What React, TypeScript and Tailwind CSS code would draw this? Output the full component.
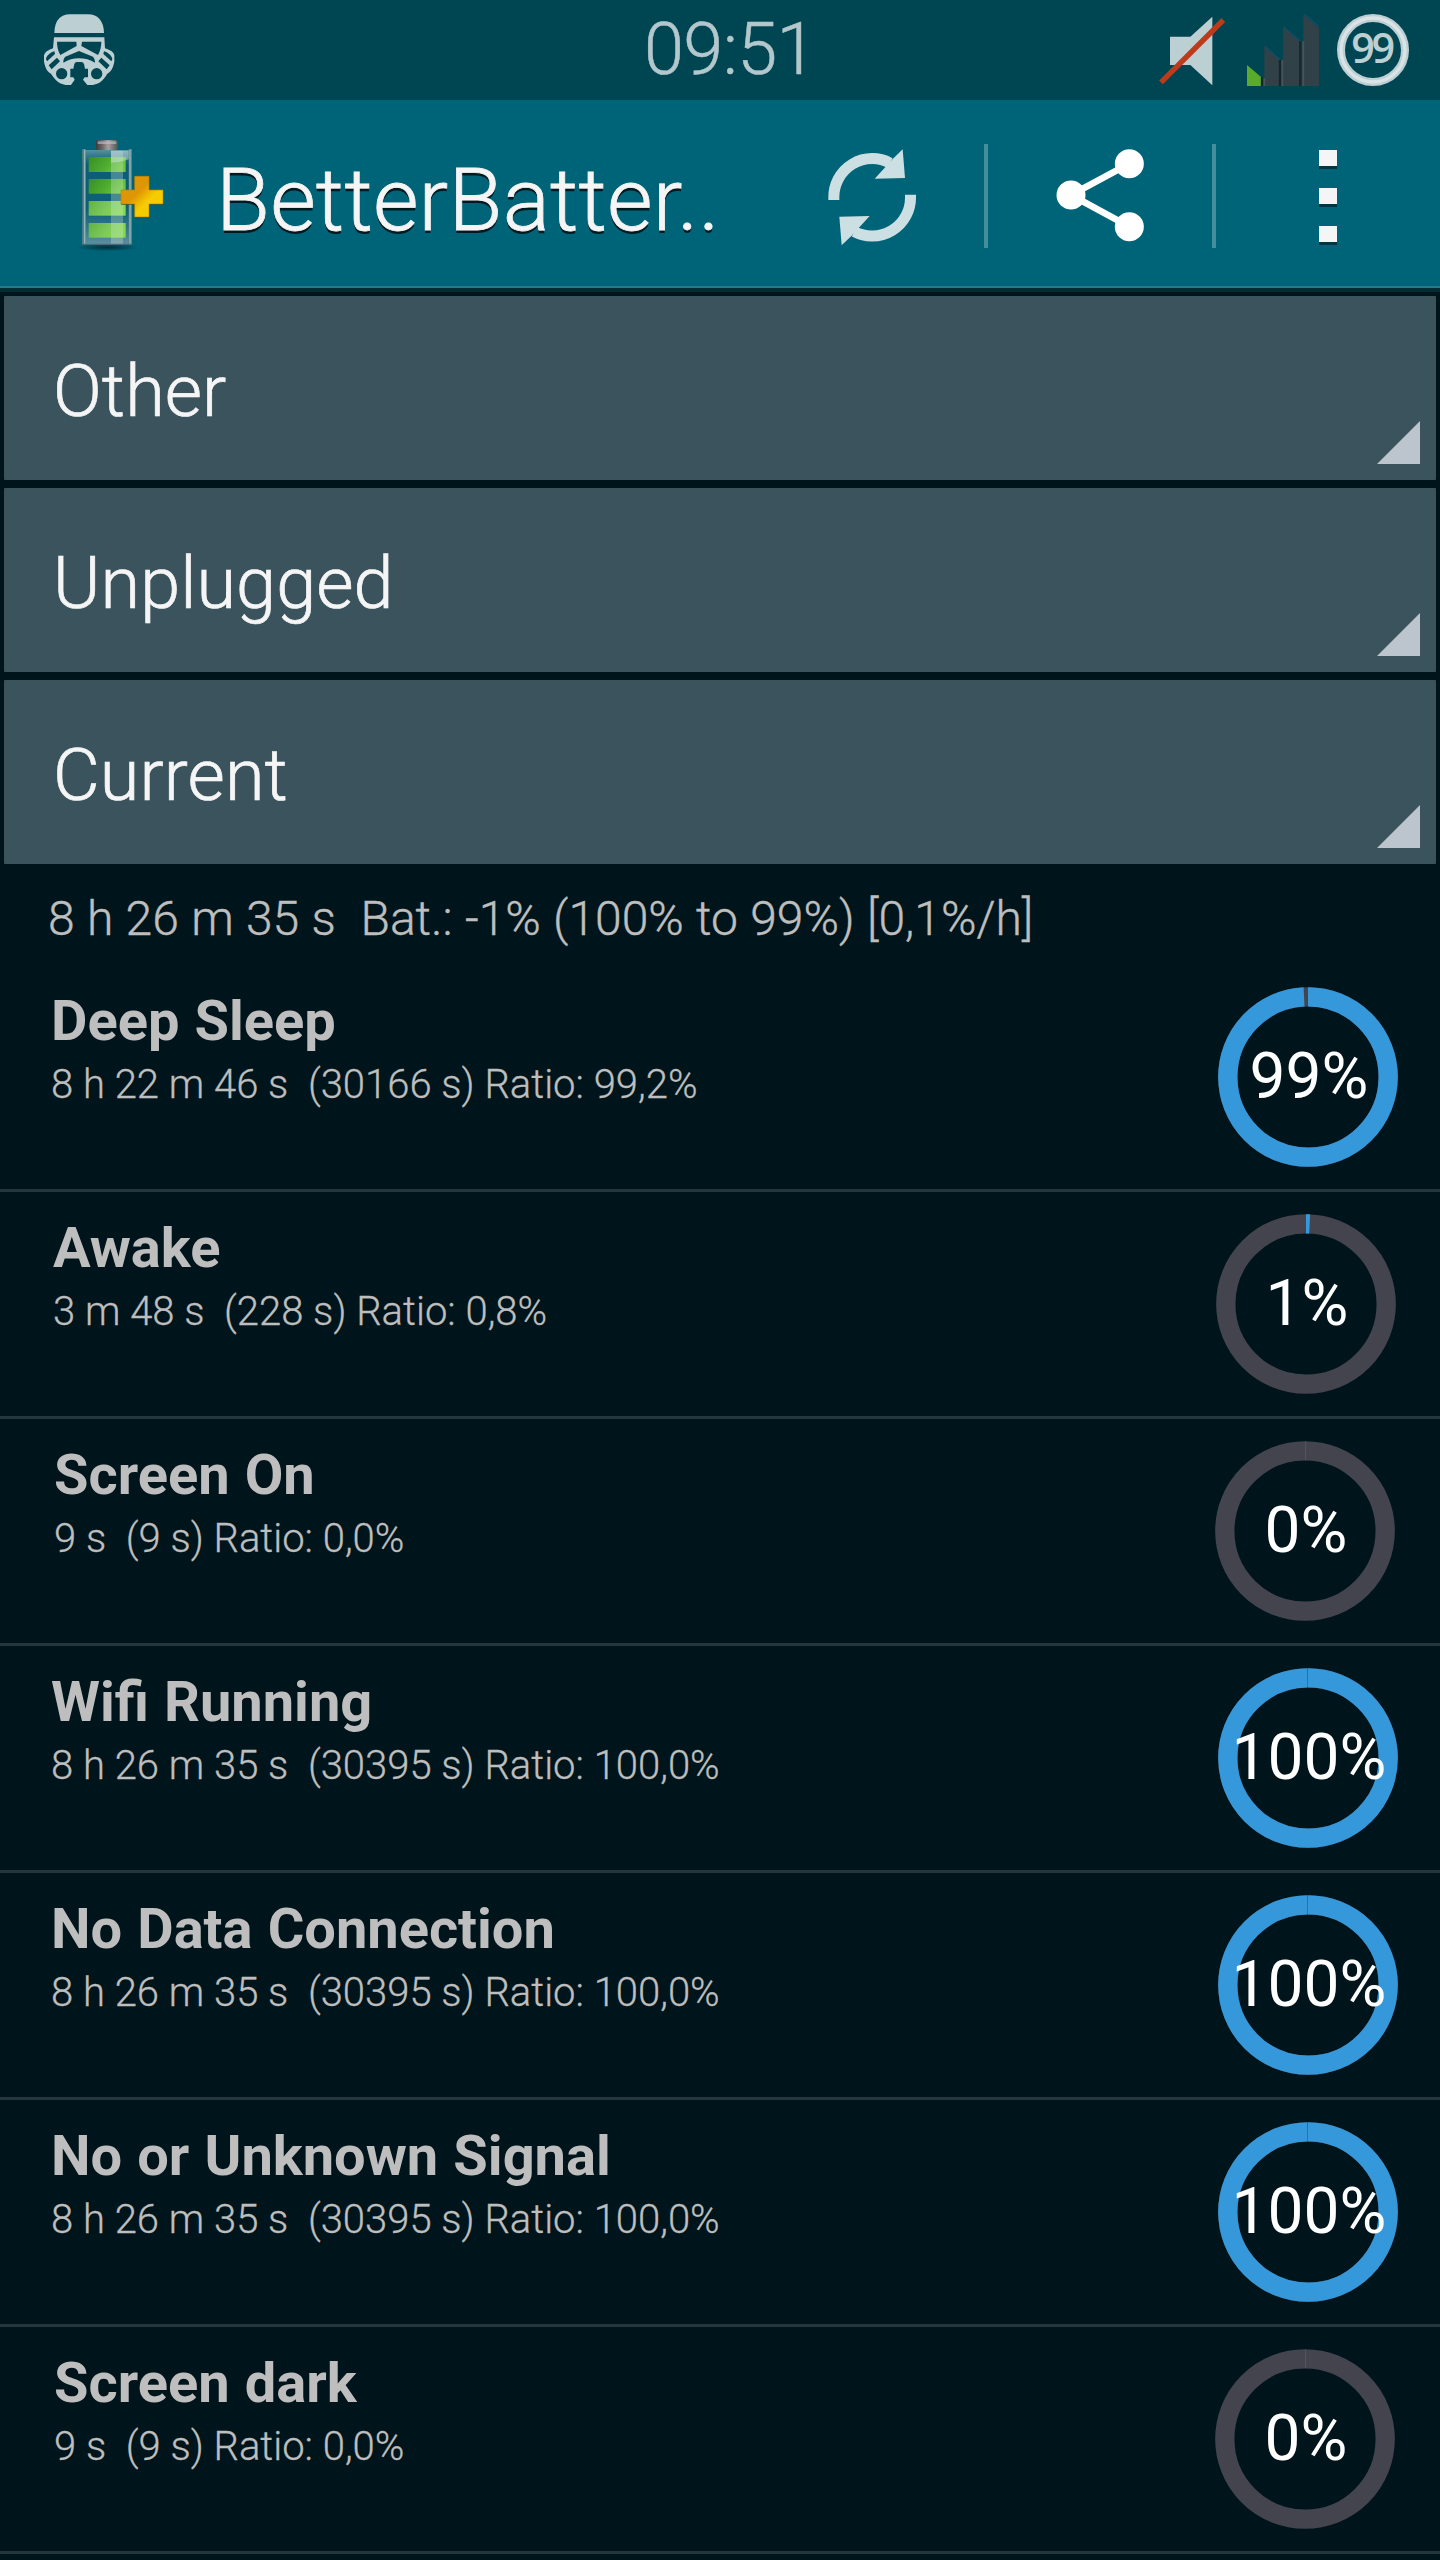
import clsx from "clsx";

type Stat = {
  name: string;
  duration: string;
  seconds: string;
  ratio: string;
  arc: number;
  label: string;
  textInset: string;
  ringInset: string;
};

const stats: Stat[] = [
  { name: "Deep Sleep", duration: "8 h 22 m 46 s", seconds: "30166 s", ratio: "99,2%", arc: 99.2, label: "99%", textInset: "pl-[51px]", ringInset: "pr-[42px]" },
  { name: "Awake", duration: "3 m 48 s", seconds: "228 s", ratio: "0,8%", arc: 0.75, label: "1%", textInset: "pl-[53px]", ringInset: "pr-[44px]" },
  { name: "Screen On", duration: "9 s", seconds: "9 s", ratio: "0,0%", arc: 0.05, label: "0%", textInset: "pl-[54px]", ringInset: "pr-[45px]" },
  { name: "Wifi Running", duration: "8 h 26 m 35 s", seconds: "30395 s", ratio: "100,0%", arc: 99.9, label: "100%", textInset: "pl-[51px]", ringInset: "pr-[42px]" },
  { name: "No Data Connection", duration: "8 h 26 m 35 s", seconds: "30395 s", ratio: "100,0%", arc: 99.9, label: "100%", textInset: "pl-[51px]", ringInset: "pr-[42px]" },
  { name: "No or Unknown Signal", duration: "8 h 26 m 35 s", seconds: "30395 s", ratio: "100,0%", arc: 99.9, label: "100%", textInset: "pl-[51px]", ringInset: "pr-[42px]" },
  { name: "Screen dark", duration: "9 s", seconds: "9 s", ratio: "0,0%", arc: 0.05, label: "0%", textInset: "pl-[54px]", ringInset: "pr-[45px]" },
];

function TrooperIcon() {
  return (
    <svg className="h-[74px] w-[74px]" viewBox="126 39 222 222" fill="#bccfd3" aria-hidden="true">
      <path d="M163 99C164 62 180 43 210 43H264C295 43 311 64 312 99Z" />
      <path
        fillRule="evenodd"
        d="M162 112H313L315 145C332 150 342 157 343 166V185C339 205 332 216 322 221C310 243 294 255 270 255H262L249 239L254 232H264V206H255L252 192Q250 186 244 186H231Q225 186 223 192L220 206H211V232H220L224 239L213 255H205C182 255 166 243 153 221C143 216 136 205 132 185V166C134 157 143 150 159 145Z
        M171 125H229L230 138L181 165C174 152 171 140 171 125Z
        M304 125H246L244 138L294 165C301 152 304 140 304 125Z
        M190 188C190 178 192 173 196 170L237 153L279 170C283 174 285 180 285 188C270 179 255 175 237 175C220 175 205 179 190 188Z
        M138 177C139 168 150 158 163 154L165 162L141 184Z
        M146 196L171 173L180 184L155 208Z
        M337 177C336 168 325 158 312 154L310 162L334 184Z
        M329 196L304 173L295 184L320 208Z
        M202 221A17 17 0 1 0 168 221A17 17 0 1 0 202 221Z
        M307 221A17 17 0 1 0 273 221A17 17 0 1 0 307 221Z"
      />
    </svg>
  );
}

function MutedIcon() {
  return (
    <svg className="h-[74px] w-[70px]" viewBox="54 39 210 222" aria-hidden="true">
      <path d="M90 110H151L217 50V256L151 195H90Z" fill="#bccfd3" />
      <path d="M63 247L250 60" stroke="#bd3a1a" strokeWidth="16" />
    </svg>
  );
}

function SignalIcon() {
  return (
    <svg className="h-[72px] w-[72px]" viewBox="321 42 216 216" aria-hidden="true">
      <path d="M321 195L364 232V258H321Z" fill="#5aab2a" />
      <g fill="#304248">
        <path d="M364 232L373 236V138L420 180L429 178V80L478 124L490 122V43L537 84V258H364Z" />
      </g>
      <path d="M375 138L419 178M431 80L480 122M493 42L537 80" stroke="#0b5068" strokeWidth="4" />
      <path d="M366 232V258M420 180V258M481 124V258" stroke="#15272e" strokeWidth="7" />
      <path d="M373 234V258M427 180V258M490 124V258" stroke="#44565c" strokeWidth="5" />
    </svg>
  );
}

function BatteryLevelIcon() {
  return (
    <svg className="h-[72px] w-[72px]" viewBox="591 42 216 216" aria-hidden="true">
      <circle cx="699" cy="150" r="96" fill="none" stroke="#bccfd3" strokeWidth="24" />
      <circle cx="699" cy="150" r="96" fill="none" stroke="#dae3e6" strokeWidth="10" />
      <text
        x="699.500"
        y="189"
        textAnchor="middle"
        textLength="132"
        fontSize="124"
        fontWeight="600"
        fill="#bccfd3"
        className="font-['Open_Sans',sans-serif]"
      >
        99
      </text>
    </svg>
  );
}

function StatusBar() {
  return (
    <div className="flex h-[100px] items-center bg-[#004552]">
      <div className="w-[644px] pl-[42px]">
        <TrooperIcon />
      </div>
      <span className="text-[72px] leading-[98px] font-light tracking-[-0.6px] text-[#b3c8cc] [-webkit-text-stroke:0.5px_#b3c8cc]">
        09:51
      </span>
      <div className="ml-auto flex items-center pr-[31px]">
        <MutedIcon />
        <div className="ml-[19px]">
          <SignalIcon />
        </div>
        <div className="ml-[18px]">
          <BatteryLevelIcon />
        </div>
      </div>
    </div>
  );
}

function AppLogo() {
  return (
    <svg className="h-[116px] w-[92px]" viewBox="225 411 276 348" aria-hidden="true">
      <defs>
        <linearGradient id="cap">
          <stop offset="0" stopColor="#3c3c3c" />
          <stop offset=".3" stopColor="#6a6a6a" />
          <stop offset=".55" stopColor="#a2a2a2" />
          <stop offset="1" stopColor="#505050" />
        </linearGradient>
        <linearGradient id="dark-cell" x1="0" y1="0" x2="1" y2=".3">
          <stop offset="0" stopColor="#378f25" />
          <stop offset=".6" stopColor="#50ad30" />
          <stop offset="1" stopColor="#6cc63c" />
        </linearGradient>
        <linearGradient id="light-cell" x1="0" y1="0" x2="1" y2=".3">
          <stop offset="0" stopColor="#60b343" />
          <stop offset=".6" stopColor="#80c95c" />
          <stop offset="1" stopColor="#86d84e" />
        </linearGradient>
        <linearGradient id="plus" x1="0" y1="0" x2="1" y2="1">
          <stop offset=".4" stopColor="#df9606" />
          <stop offset=".62" stopColor="#f5cc00" />
        </linearGradient>
        <linearGradient id="glass" x1="0" y1="0" x2="0" y2="1">
          <stop offset="0" stopColor="#9ec0c8" stopOpacity=".55" />
          <stop offset=".16" stopColor="#5c91a0" stopOpacity=".08" />
          <stop offset=".6" stopColor="#5c91a0" stopOpacity=".1" />
          <stop offset="1" stopColor="#8ab0ba" stopOpacity=".65" />
        </linearGradient>
        <radialGradient id="ground">
          <stop offset="0" stopColor="#002f3a" />
          <stop offset="1" stopColor="#002f3a" stopOpacity="0" />
        </radialGradient>
      </defs>
      <ellipse cx="322" cy="742" rx="94" ry="12" fill="url(#ground)" />
      <rect x="288" y="420" width="66" height="32" rx="7" fill="url(#cap)" />
      <path d="M293 424H349V432H293Z" fill="#c4c4c4" opacity=".6" />
      <rect x="247" y="450" width="149" height="284" fill="#045a70" />
      <rect x="247" y="450" width="149" height="284" fill="url(#glass)" />
      <rect x="266" y="471" width="111" height="45" fill="url(#dark-cell)" />
      <rect x="266" y="537" width="111" height="44" fill="url(#dark-cell)" />
      <rect x="266" y="603" width="111" height="44" fill="url(#light-cell)" />
      <rect x="266" y="669" width="111" height="44" fill="url(#light-cell)" />
      <rect x="333" y="452" width="36" height="280" fill="#d0ead8" opacity=".3" />
      <path d="M333 452H387V478Q360 488 333 488Z" fill="#d8e6e8" opacity=".45" />
      <path d="M252 447V733M391 447V733" stroke="#5e7f87" strokeWidth="10" />
      <path d="M254 449V733M390 449V733" stroke="#92b4bb" strokeWidth="4" />
      <path d="M249 733H394" stroke="#456b75" strokeWidth="4" />
      <path d="M403 532H448V574H490V615H448V655H403V615H363V574H403Z" fill="#003b48" opacity=".6" />
      <path d="M404 529H447V570H489V612H447V651H404V612H363V570H404Z" fill="url(#plus)" stroke="#b98405" strokeWidth="2" />
    </svg>
  );
}

function RefreshIcon() {
  return (
    <svg className="h-[100px] w-[92px]" viewBox="79 81 276 300" aria-hidden="true">
      <g id="refresh-arrow">
        <path d="M102.500 240V231A115 115 0 0 1 271 129" fill="none" stroke="#cce0e4" strokeWidth="33" />
        <path d="M309 88L316 174L225 176L258 140L280 116Z" fill="#cce0e4" />
      </g>
      <use href="#refresh-arrow" transform="rotate(180 217.500 232)" />
    </svg>
  );
}

function ShareIcon() {
  return (
    <svg className="h-[96px] w-[92px]" viewBox="763 82 276 288" fill="#fff" aria-hidden="true">
      <path d="M989 132L814 226L989 321" fill="none" stroke="#fff" strokeWidth="20" />
      <circle cx="814" cy="226" r="43.500" />
      <circle cx="989" cy="132" r="43.500" />
      <circle cx="989" cy="321" r="43.500" />
    </svg>
  );
}

function Divider() {
  return <div className="mt-[44px] h-[104px] w-1 bg-[#458e9c]" />;
}

function ActionBar() {
  return (
    <header className="flex h-[188px] items-start border-b-2 border-[#267b87] bg-[#006478]">
      <div className="w-[216px] pt-[37px] pl-[75px]">
        <AppLogo />
      </div>
      <h1 className="w-[610px] text-[88px] leading-[200px] font-light tracking-[0.2px] whitespace-nowrap text-[#f5f5f5] [-webkit-text-stroke:0.8px_#f5f5f5] [text-shadow:0_3px_0_#001a20]">
        BetterBatter..
      </h1>
      <div className="w-[158px] pt-[47px]">
        <RefreshIcon />
      </div>
      <Divider />
      <div className="w-[224px] pt-[47px] pl-[66px]">
        <ShareIcon />
      </div>
      <Divider />
      <div className="flex flex-col gap-[22px] pt-[50px] pl-[103px]">
        {[0, 1, 2].map((dot) => (
          <span key={dot} className="h-4 w-[18px] bg-[#f5f5f5] shadow-[0_3px_0_#003641]" />
        ))}
      </div>
    </header>
  );
}

function Spinner({ value }: { value: string }) {
  return (
    <button
      type="button"
      className="flex h-[184px] w-full items-start justify-between rounded-[1px] bg-[#3b535c] pr-4 pl-[49px] text-left"
    >
      <span className="text-[72px] leading-[191px] font-light tracking-[0.1px] text-[#f5f5f5] [-webkit-text-stroke:0.7px_#f5f5f5]">
        {value}
      </span>
      <svg className="mt-[125px] h-[43px] w-[43px]" viewBox="0 0 43 43" aria-hidden="true">
        <path d="M43 0V43H0Z" fill="#bcc4ce" />
      </svg>
    </button>
  );
}

function Ring({ arc, label }: { arc: number; label: string }) {
  return (
    <div className="grid h-[180px] w-[180px] place-items-center">
      <svg className="col-start-1 row-start-1 h-[180px] w-[180px]" viewBox="0 0 180 180" aria-hidden="true">
        <circle cx="90" cy="90" r="80.200" fill="none" stroke="#44444f" strokeWidth="19.300" />
        <circle
          cx="90"
          cy="90"
          r="80.200"
          fill="none"
          stroke="#3498db"
          strokeWidth="19.300"
          pathLength="100"
          strokeDasharray={`${arc} ${100 - arc}`}
          transform="rotate(-90 90 90)"
        />
      </svg>
      <span className="z-10 col-start-1 row-start-1 ml-0.5 text-[64px] leading-[180px] whitespace-nowrap text-white">
        {label}
      </span>
    </div>
  );
}

function StatRow({ stat }: { stat: Stat }) {
  return (
    <li className={clsx("flex h-[227px] items-start justify-between border-b-3 border-[#26363e]", stat.textInset, stat.ringInset)}>
      <div className="pt-[23px] text-[#bebebe]">
        <h2 className="text-[56px] leading-[66px] font-bold [word-spacing:1.2px]">{stat.name}</h2>
        <p className="text-[40px] leading-[62px] font-light whitespace-pre [-webkit-text-stroke:0.3px_#bebebe]">
          {`${stat.duration}  (${stat.seconds}) Ratio: ${stat.ratio}`}
        </p>
      </div>
      <div className="pt-[22px]">
        <Ring arc={stat.arc} label={stat.label} />
      </div>
    </li>
  );
}

export default function App() {
  return (
    <div className="h-[2560px] w-[1440px] overflow-hidden bg-[#00151b] font-['Roboto',sans-serif]">
      <StatusBar />
      <ActionBar />
      <div className="h-1 bg-[#002c33]" />
      <div className="flex flex-col gap-2 px-1 pt-1">
        <Spinner value="Other" />
        <Spinner value="Unplugged" />
        <Spinner value="Current" />
      </div>
      <p className="h-[101px] pl-[48px] text-[48px] leading-[109px] font-light whitespace-pre text-[#bebebe] [-webkit-text-stroke:0.4px_#bebebe] [word-spacing:0.6px]">
        {"8 h 26 m 35 s  Bat.: -1% (100% to 99%) [0,1%/h]"}
      </p>
      <ul>
        {stats.map((stat) => (
          <StatRow key={stat.name} stat={stat} />
        ))}
      </ul>
    </div>
  );
}
